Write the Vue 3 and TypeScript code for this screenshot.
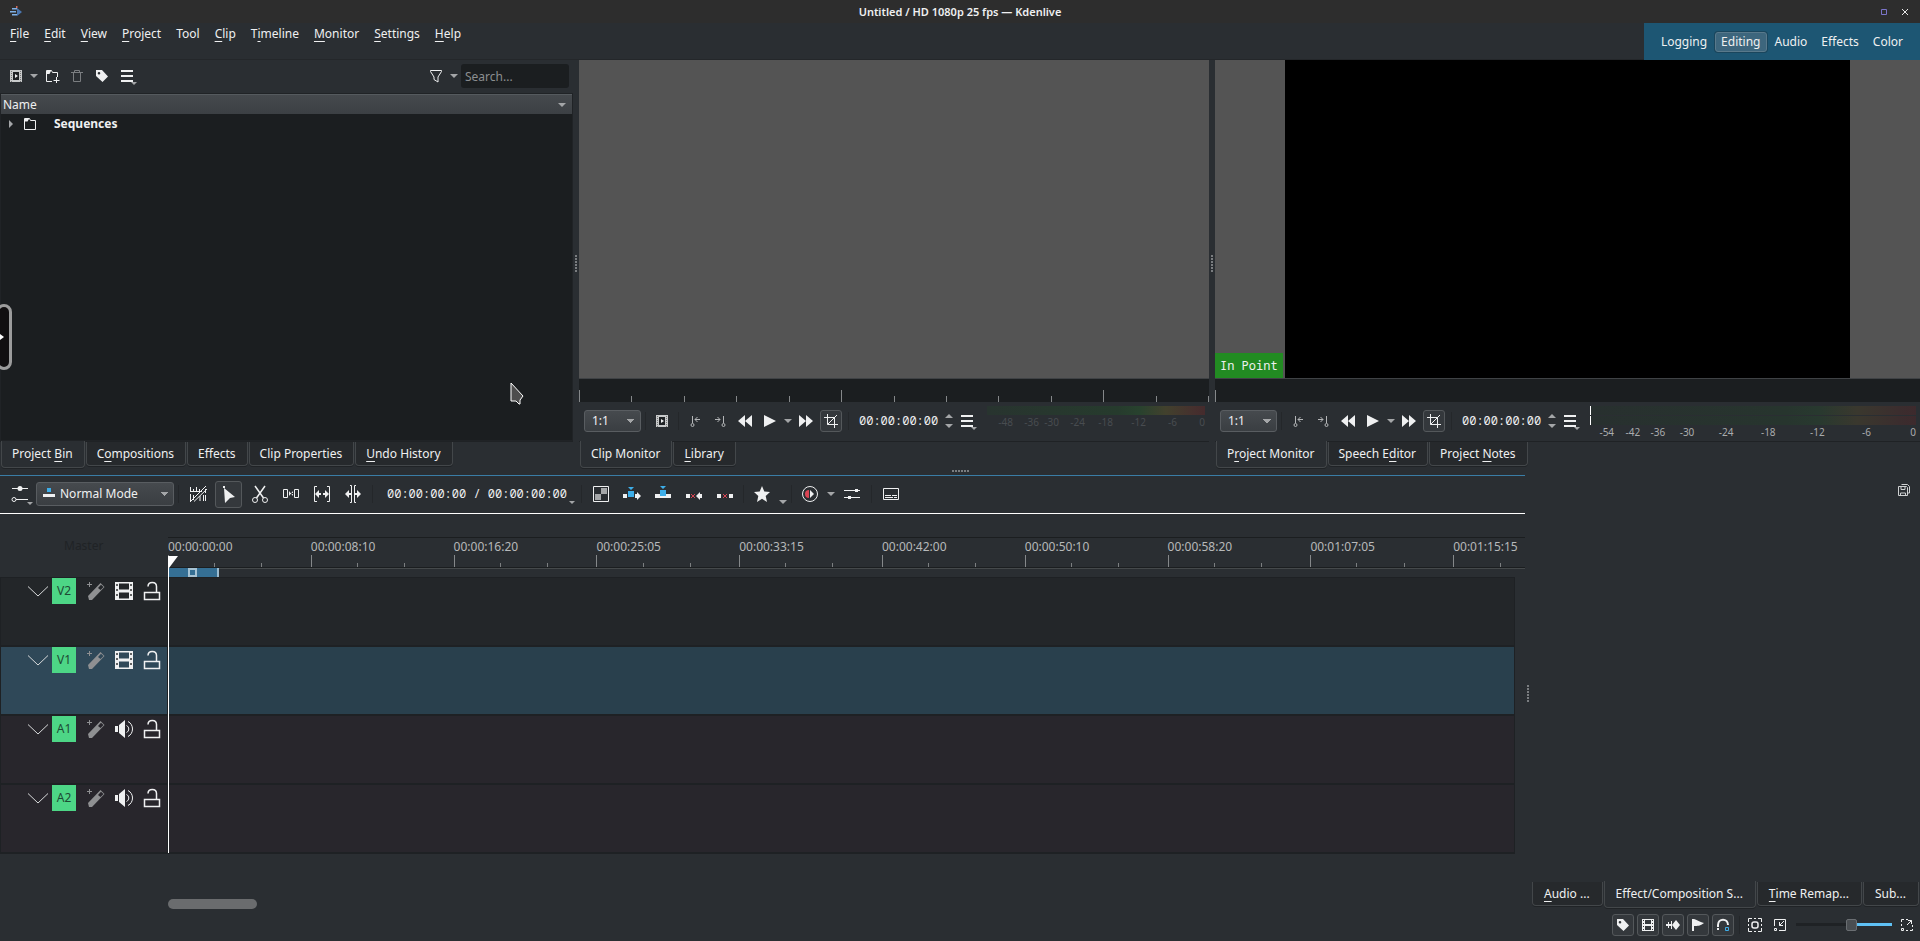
<script setup lang="ts">
import { ref } from 'vue'

interface Label { before: string; key: string; after: string }
interface Track { id: string; kind: 'video' | 'audio'; active: boolean }
interface Mark { text: string; grow: number }

/* An ampersand marks the mnemonic letter. */
function parse(text: string): Label {
  const i = text.indexOf('&')
  if (i < 0) return { before: text, key: '', after: '' }
  return { before: text.slice(0, i), key: text[i + 1], after: text.slice(i + 2) }
}

const menus = ['&File', '&Edit', '&View', '&Project', 'Tool', '&Clip', 'T&imeline', '&Monitor', '&Settings', '&Help'].map(parse)
const workspaces = ['Logging', 'Editing', 'Audio', 'Effects', 'Color']
const workspace = ref('Editing')

const binTabs = ['Project &Bin', 'C&ompositions', 'Effects', 'Clip Properties', '&Undo History'].map(parse)
const clipTabs = ['Clip Monitor', '&Library'].map(parse)
const projectTabs = ['P&roject Monitor', 'Speech E&ditor', 'Project &Notes'].map(parse)
const effectTabs = ['&Audio ...', 'Effect/Composition S...', '&Time Remap...', 'Sub...'].map(parse)

const clipMarks: Mark[] = [
  { text: '-48', grow: 26 }, { text: '-36', grow: 26 }, { text: '-30', grow: 20 }, { text: '-24', grow: 26 },
  { text: '-18', grow: 28 }, { text: '-12', grow: 33 }, { text: '-6', grow: 31 }, { text: '0', grow: 28 },
]
const projectMarks: Mark[] = [
  { text: '-54', grow: 24 }, { text: '-42', grow: 26 }, { text: '-36', grow: 25 }, { text: '-30', grow: 29 }, { text: '-24', grow: 39 },
  { text: '-18', grow: 42 }, { text: '-12', grow: 49 }, { text: '-6', grow: 46 }, { text: '0', grow: 45 },
]

const times = ['00:00:00:00', '00:00:08:10', '00:00:16:20', '00:00:25:05', '00:00:33:15', '00:00:42:00', '00:00:50:10', '00:00:58:20', '00:01:07:05', '00:01:15:15']
const tracks: Track[] = [
  { id: 'V2', kind: 'video', active: false },
  { id: 'V1', kind: 'video', active: true },
  { id: 'A1', kind: 'audio', active: false },
  { id: 'A2', kind: 'audio', active: false },
]

const monitorTools = [
  { icon: 'zoneIn', label: 'Set zone in' },
  { icon: 'zoneOut', label: 'Set zone out' },
  { icon: 'rewind', label: 'Rewind' },
  { icon: 'play', label: 'Play' },
]
const editTools = [
  { icon: 'group', label: 'Edit mode' },
  { icon: 'select', label: 'Selection tool' },
  { icon: 'razor', label: 'Razor tool' },
  { icon: 'spacer', label: 'Spacer tool' },
  { icon: 'slip', label: 'Slip tool' },
  { icon: 'ripple', label: 'Ripple tool' },
]
const insertTools = [
  { icon: 'mix', label: 'Mix clips' },
  { icon: 'insert', label: 'Insert zone' },
  { icon: 'overwrite', label: 'Overwrite zone' },
  { icon: 'extract', label: 'Extract zone' },
  { icon: 'lift', label: 'Lift zone' },
]
const statusTools = [
  { icon: 'tag', label: 'Color tags' },
  { icon: 'film16', label: 'Show video thumbnails' },
  { icon: 'wave', label: 'Show audio thumbnails' },
  { icon: 'flag', label: 'Show markers' },
  { icon: 'magnet', label: 'Snap' },
]
const zoom = ref(59)
const clipTime = ref('00:00:00:00')
const projectTime = ref('00:00:00:00')

const W = '#eff0f1'
const icons: Record<string, [number, string]> = {
  clip: [16, `<path d="M2 2h12v12H2z" fill="#c8cacb"/><path d="M5 4h6v8H5z" fill="#1f2225"/><path d="M7 6v4l3-2z" fill="${W}"/><path d="M3.500 3v11M12.500 3v11" stroke="#777" stroke-dasharray="1 1"/>`],
  down: [8, '<path d="M0 2h8L4 6z" fill="#a4a6a8"/>'],
  up: [8, '<path d="M0 6h8L4 2z" fill="#a4a6a8"/>'],
  folderAdd: [16, `<path d="M8 13.500H2.500v-11h5l1 2h5V9" fill="none" stroke="${W}"/><path d="M3 3h4l-1.500 3H3z" fill="${W}"/><path d="M12.500 9v6M9.500 12.500h6" fill="none" stroke="${W}"/>`],
  folder: [16, `<path d="M2.500 2.500h5l1 2h5v9h-11z" fill="none" stroke="${W}"/><path d="M3 3h4l-1.500 2.500H3z" fill="${W}"/>`],
  trash: [16, '<path d="M2 4.500h12M5.500 4V2.500h5V4M4.500 5v8.500h7V5" fill="none" stroke="#7a7d80"/>'],
  tag: [16, `<path fill-rule="evenodd" d="M2 2h6l6 6.500L8.500 14 2 8zM5 4a1.300 1.300 0 100 2.600A1.300 1.300 0 005 4z" fill="${W}"/>`],
  menu: [16, `<path d="M2 2h12v2H2zM2 7h12v2H2zM2 12h12v2H2z" fill="${W}"/>`],
  filter: [16, `<path d="M2.500 2.500h11v1L10 9v5L6 11.500V9L2.500 3.500z" fill="none" stroke="${W}"/>`],
  zoneIn: [16, '<path d="M5.500 3v7M8 6.500h5M10.500 4L8 6.500 10.500 9" fill="none" stroke="#b4b6b8"/><circle cx="5.500" cy="12" r="1.500" fill="none" stroke="#b4b6b8"/>'],
  zoneOut: [16, '<path d="M11.500 3v7M3 6.500h5M5.500 4L8 6.500 5.500 9" fill="none" stroke="#b4b6b8"/><circle cx="11.500" cy="12" r="1.500" fill="none" stroke="#b4b6b8"/>'],
  rewind: [16, `<path d="M8 2v12L1 8zM15 2v12L8 8z" fill="${W}"/>`],
  forward: [16, `<path d="M1 2v12l7-6zM8 2v12l7-6z" fill="${W}"/>`],
  play: [16, `<path d="M2 2v12l12-6z" fill="${W}"/>`],
  crop: [16, `<path d="M4.500 1v10.500H15M1 4.500h10.500V15M4.500 11.500L14 2" fill="none" stroke="${W}"/>`],
  trackSettings: [22, `<path d="M3 5.500h16M7 16.500h12" stroke="${W}"/><circle cx="11" cy="5.500" r="2.500" fill="${W}"/><circle cx="5" cy="16.500" r="2" fill="none" stroke="${W}"/>`],
  mode: [16, '<path d="M6 3h4v4H6z" fill="#3daee9"/><path d="M2 9h12v3H2z" fill="#eff0f1"/>'],
  group: [22, `<path d="M3.500 4v4M6.500 6v2M9.500 4v4M12.500 6v2M3 8.500h12M3.500 11v8M6.500 12v5M18.500 6v4M16.500 12v6M18.500 12v6M4 18L19 3M7 18.500L20 6M13 13v5" fill="none" stroke="${W}"/>`],
  select: [22, `<path d="M6 5l11 9-5 1-5 5z" fill="${W}"/><path d="M5 3h2v2H5z" fill="${W}"/>`],
  razor: [22, `<path d="M6 3l8.500 12M16 3L7.500 15" fill="none" stroke="${W}" stroke-width="1.500"/><circle cx="6" cy="17" r="2.500" fill="none" stroke="${W}"/><circle cx="16" cy="17" r="2.500" fill="none" stroke="${W}"/>`],
  spacer: [22, `<path d="M3.500 6.500h4v8h-4zM14.500 6.500h4v8h-4z" fill="none" stroke="${W}"/><path d="M9 8l2 2.500L9 13zM13 8l-2 2.500 2 2.500zM9 10h4v1H9z" fill="${W}"/>`],
  slip: [22, `<path d="M6 3.500H3.500v15H6M16 3.500h2.500v15H16" fill="none" stroke="${W}"/><path d="M4 11l4-4v3h2v2H8v3zM18 11l-4-4v3h-2v2h2v3z" fill="${W}"/>`],
  ripple: [22, `<path d="M8 2.500h1.500v17H8M14 2.500h-1.500v17H14" fill="none" stroke="${W}"/><path d="M3 11l4-4v3h2v2H7v3zM19 11l-4-4v3h-2v2h2v3z" fill="${W}"/>`],
  mix: [22, `<path d="M3.500 3.500h15v15h-15z" fill="none" stroke="${W}"/><path d="M11 5h6v6h-6zM5 11h6v6H5z" fill="#a5a7a9"/>`],
  insert: [22, `<path d="M2 11h4v4H2zM14 11h2V9l4 4-4 4v-2h-2z" fill="${W}"/><path d="M7 8h6v6H7zM7 4h6l-3 3z" fill="#3daee9"/>`],
  overwrite: [22, `<path d="M3 11h16v4H3z" fill="${W}"/><path d="M8 7h6v6H8zM8 3h6l-3 3z" fill="#3daee9"/>`],
  extract: [22, `<path d="M3 11h4v4H3zM19 11h-2V9l-4 4 4 4v-2h2z" fill="${W}"/><path d="M8 11l4 4M12 11l-4 4" stroke="#da4453"/>`],
  lift: [22, `<path d="M3 11h4v4H3zM15 11h4v4h-4z" fill="${W}"/><path d="M9 11l4 4M13 11l-4 4" stroke="#da4453"/>`],
  star: [22, `<path d="M11 3l2.300 5.500 5.700.5-4.300 4 1.300 6-5-3.200L6 19l1.300-6L3 9l5.700-.5z" fill="${W}"/>`],
  preview: [22, `<circle cx="11" cy="11" r="7.500" fill="none" stroke="${W}"/><path d="M10 7v8a4 4 0 010-8z" fill="#da4453"/><path d="M11 7l4 4-4 4z" fill="${W}"/>`],
  sliders: [22, `<path d="M3 7.500h16M3 14.500h16" stroke="${W}"/><path d="M14 6h3v3h-3zM7 13h3v3H7z" fill="${W}"/>`],
  subtitle: [22, `<path d="M3.500 5.500h15v11h-15zM5 12.500h6M12 12.500h5M5 14.500h8M14 14.500h3" fill="none" stroke="${W}"/>`],
  chevron: [22, '<path d="M1 6.500l10 9.500 10-9.500" fill="none" stroke="#d8dadb"/>'],
  wand: [20, '<path fill-rule="evenodd" d="M2 15L14.500 2l4 4L6 19H3zM12 7l2.500 2 3-3-2.500-2.300z" fill="#8f9092"/><path d="M3.500 1v5M1 3.500h5" stroke="#8f9092"/>'],
  film: [20, `<path fill-rule="evenodd" d="M1 1h18v18H1zM5 2.500v6h10v-6zM5 11.500v6h10v-6z" fill="${W}"/><path d="M3 3v15M17 3v15" stroke="#333" stroke-width="1.500" stroke-dasharray="2 3"/>`],
  speaker: [20, `<path d="M1 7h3v6H1zM5 6l6-5v18l-6-5z" fill="${W}"/><path d="M12.500 6.500c3 1.500 3 5.500 0 7M14 2.500c6 3 6 12 0 15" fill="none" stroke="${W}"/>`],
  lock: [20, `<path d="M2.500 11.500h15v7h-15z" fill="none" stroke="${W}" stroke-width="1.500"/><path d="M6 5.500c0-5.500 8.500-5.500 8.500 0v6" fill="none" stroke="${W}" stroke-width="1.500"/>`],
  film16: [16, `<path fill-rule="evenodd" d="M2 2h12v12H2zM5 3v4h6V3zM5 9v4h6V9z" fill="${W}"/><path d="M3.500 3v11M12.500 3v11" stroke="#333" stroke-dasharray="1 2"/>`],
  wave: [16, `<path d="M1 7h2V5h1v2h2V4h1v8H6V9H4v2H3V9H1zM7 8l4-5 4 5-4 5z" fill="${W}"/>`],
  flag: [16, `<path d="M2 2h2c4 1 5 3 10 4-4 3-6 3-10 3v5H2z" fill="${W}"/>`],
  magnet: [16, `<path d="M3 13V8c0-7 10-7 10 0" fill="none" stroke="${W}" stroke-width="2"/><path d="M2 10.500h2" stroke="#3a3d41"/><path d="M10.500 10.500h3v3h-3z" fill="none" stroke="#3daee9"/>`],
  fit: [16, `<path d="M1.500 5V1.500H5M11 1.500h3.500V5M14.500 11v3.500H11M5 14.500H1.500V11M7 1.500h2M7 14.500h2M1.500 7v2M14.500 7v2" fill="none" stroke="${W}"/><rect x="5" y="5" width="6" height="6" rx="2" fill="none" stroke="${W}" stroke-width="1.500"/>`],
  zoomOut: [16, `<path d="M2.500 9V2.500h11v11H7M12 4L7.500 8.500M7.500 5v3.500H11M2.500 11.500h2v2h-2z" fill="none" stroke="${W}"/>`],
  zoomIn: [16, `<path d="M2.500 5V2.500H5M7 2.500h2M13.500 8v2M13.500 12v1.500H11M9 13.500H7M2.500 7v2M8 8l4.500-4.500M9 3.500h3.500V7M2.500 11.500h2v2h-2z" fill="none" stroke="${W}"/>`],
  saveAll: [16, '<path d="M2.500 4.500h8l1 1v8h-9zM5.500 2.500h6l2 2v6.500h-1.500M5 5v2.500h4V5M4.500 13v-2h5v2" fill="none" stroke="#cfd1d2"/>'],
  app: [16, '<path d="M4 4h5v1.500H4zM2 7h6v1.500H2zM4 10h5v1.500H4z" fill="#7fb0e6"/><path d="M9 4l5 4-5 4z" fill="#4a76b0"/><path d="M8 2h1.500v2H8z" fill="#d06a5a"/>'],
}
</script>

<template>
  <div class="window">
    <header class="titlebar">
      <svg class="i16" viewBox="0 0 16 16" v-html="icons.app[1]"></svg>
      <h1>Untitled / HD 1080p 25 fps — Kdenlive</h1>
      <div class="winbuttons">
        <button aria-label="Maximize"><svg viewBox="0 0 8 8"><path d="M1.500 1.500h5v5h-5z" fill="none" stroke="#7b74c9" /></svg></button>
        <button aria-label="Close"><svg viewBox="0 0 8 8"><path d="M1 1l6 6M7 1L1 7" stroke="#e8e8e8" /></svg></button>
      </div>
    </header>

    <div class="menubar">
      <nav class="menus">
        <button v-for="m in menus" :key="m.before + m.key">{{ m.before }}<u>{{ m.key }}</u>{{ m.after }}</button>
      </nav>
      <nav class="workspaces">
        <button v-for="w in workspaces" :key="w" :class="{ on: w === workspace }" @click="workspace = w">{{ w }}</button>
      </nav>
    </div>

    <main class="docks">
      <section class="dock bin">
        <div class="bintools">
          <button class="tool" aria-label="Add clip"><svg class="i16" viewBox="0 0 16 16" v-html="icons.clip[1]"></svg></button>
          <button class="drop" aria-label="Add clip menu"><svg viewBox="0 0 8 8" v-html="icons.down[1]"></svg></button>
          <button class="tool" aria-label="Create folder"><svg class="i16" viewBox="0 0 16 16" v-html="icons.folderAdd[1]"></svg></button>
          <button class="tool" aria-label="Delete" disabled><svg class="i16" viewBox="0 0 16 16" v-html="icons.trash[1]"></svg></button>
          <button class="tool" aria-label="Tags"><svg class="i16" viewBox="0 0 16 16" v-html="icons.tag[1]"></svg></button>
          <button class="tool corner" aria-label="Options"><svg class="i16" viewBox="0 0 16 16" v-html="icons.menu[1]"></svg></button>
          <span class="fill"></span>
          <button class="tool" aria-label="Filter"><svg class="i16" viewBox="0 0 16 16" v-html="icons.filter[1]"></svg></button>
          <button class="drop" aria-label="Filter menu"><svg viewBox="0 0 8 8" v-html="icons.down[1]"></svg></button>
          <input class="search" type="search" placeholder="Search..." aria-label="Search" />
        </div>
        <div class="tree">
          <button class="treehead"><span>Name</span><svg viewBox="0 0 8 8" v-html="icons.down[1]"></svg></button>
          <div class="treerow">
            <svg class="twist" viewBox="0 0 8 8"><path d="M2 0v8l4-4z" fill="#a4a6a8" /></svg>
            <svg class="i16" viewBox="0 0 16 16" v-html="icons.folder[1]"></svg>
            <strong>Sequences</strong>
          </div>
        </div>
        <nav class="tabs">
          <button v-for="(t, i) in binTabs" :key="i" :class="{ on: i === 0 }">{{ t.before }}<u>{{ t.key }}</u>{{ t.after }}</button>
        </nav>
      </section>

      <div class="split"><i></i></div>

      <section class="dock clipmon">
        <div class="screen"></div>
        <div class="monruler"><i v-for="n in 12" :key="n" :class="{ tall: n === 1 || n === 6 || n === 11 }"></i></div>
        <div class="montools">
          <select aria-label="Clip monitor zoom"><option>1:1</option></select>
          <span class="sep"></span>
          <button class="tool" aria-label="Clip options"><svg class="i16" viewBox="0 0 16 16" v-html="icons.clip[1]"></svg></button>
          <span class="sep"></span>
          <button v-for="t in monitorTools" :key="t.icon" class="tool" :aria-label="t.label"><svg class="i16" viewBox="0 0 16 16" v-html="icons[t.icon][1]"></svg></button>
          <button class="drop" aria-label="Play menu"><svg viewBox="0 0 8 8" v-html="icons.down[1]"></svg></button>
          <button class="tool" aria-label="Forward"><svg class="i16" viewBox="0 0 16 16" v-html="icons.forward[1]"></svg></button>
          <button class="boxed" aria-label="Edit mode"><svg class="i16" viewBox="0 0 16 16" v-html="icons.crop[1]"></svg></button>
          <span class="sep"></span>
          <input v-model="clipTime" class="timecode" aria-label="Clip timecode" />
          <span class="spin"><button aria-label="Next frame"><svg viewBox="0 0 8 8" v-html="icons.up[1]"></svg></button><button aria-label="Previous frame"><svg viewBox="0 0 8 8" v-html="icons.down[1]"></svg></button></span>
          <button class="tool corner" aria-label="Monitor options"><svg class="i16" viewBox="0 0 16 16" v-html="icons.menu[1]"></svg></button>
          <div class="meter dim">
            <div class="bars"><i></i></div>
            <div class="marks"><span v-for="m in clipMarks" :key="m.text" :style="{ flexGrow: m.grow }">{{ m.text }}</span></div>
          </div>
        </div>
        <nav class="tabs">
          <button v-for="(t, i) in clipTabs" :key="i" :class="{ on: i === 0 }">{{ t.before }}<u>{{ t.key }}</u>{{ t.after }}</button>
        </nav>
      </section>

      <div class="split"><i></i></div>

      <section class="dock projmon">
        <div class="screen">
          <div class="frame"></div>
          <span class="inpoint">In Point</span>
        </div>
        <div class="monruler"><i class="tall"></i></div>
        <div class="montools">
          <select aria-label="Project monitor zoom"><option>1:1</option></select>
          <span class="sep"></span>
          <button v-for="t in monitorTools" :key="t.icon" class="tool" :aria-label="t.label"><svg class="i16" viewBox="0 0 16 16" v-html="icons[t.icon][1]"></svg></button>
          <button class="drop" aria-label="Play menu"><svg viewBox="0 0 8 8" v-html="icons.down[1]"></svg></button>
          <button class="tool" aria-label="Forward"><svg class="i16" viewBox="0 0 16 16" v-html="icons.forward[1]"></svg></button>
          <button class="boxed" aria-label="Edit mode"><svg class="i16" viewBox="0 0 16 16" v-html="icons.crop[1]"></svg></button>
          <span class="sep"></span>
          <input v-model="projectTime" class="timecode" aria-label="Project timecode" />
          <span class="spin"><button aria-label="Next frame"><svg viewBox="0 0 8 8" v-html="icons.up[1]"></svg></button><button aria-label="Previous frame"><svg viewBox="0 0 8 8" v-html="icons.down[1]"></svg></button></span>
          <button class="tool corner" aria-label="Monitor options"><svg class="i16" viewBox="0 0 16 16" v-html="icons.menu[1]"></svg></button>
          <div class="meter live">
            <div class="bars"><i></i><i></i></div>
            <div class="marks"><span v-for="m in projectMarks" :key="m.text" :style="{ flexGrow: m.grow }">{{ m.text }}</span></div>
          </div>
        </div>
        <nav class="tabs">
          <button v-for="(t, i) in projectTabs" :key="i" :class="{ on: i === 0 }">{{ t.before }}<u>{{ t.key }}</u>{{ t.after }}</button>
        </nav>
      </section>
    </main>

    <div class="hsplit"><i></i></div>

    <div class="lower">
      <section class="timeline">
        <div class="edittools">
          <button class="big corner" aria-label="Track settings"><svg class="i22" viewBox="0 0 22 22" v-html="icons.trackSettings[1]"></svg></button>
          <label class="mode">
            <svg class="i16" viewBox="0 0 16 16" v-html="icons.mode[1]"></svg>
            <select aria-label="Timeline edit mode"><option>Normal Mode</option></select>
          </label>
          <span class="sep"></span>
          <button v-for="t in editTools" :key="t.icon" class="big" :class="{ pressed: t.icon === 'select' }" :aria-label="t.label"><svg class="i22" viewBox="0 0 22 22" v-html="icons[t.icon][1]"></svg></button>
          <span class="sep"></span>
          <button class="position">00:00:00:00 / 00:00:00:00</button>
          <span class="sep"></span>
          <button v-for="t in insertTools" :key="t.icon" class="big" :aria-label="t.label"><svg class="i22" viewBox="0 0 22 22" v-html="icons[t.icon][1]"></svg></button>
          <span class="sep narrow"></span>
          <button class="big" aria-label="Favorite effects"><svg class="i22" viewBox="0 0 22 22" v-html="icons.star[1]"></svg></button>
          <button class="drop low" aria-label="Favorites menu"><svg viewBox="0 0 8 8" v-html="icons.down[1]"></svg></button>
          <span class="sep narrow"></span>
          <button class="big" aria-label="Start preview render"><svg class="i22" viewBox="0 0 22 22" v-html="icons.preview[1]"></svg></button>
          <button class="drop" aria-label="Preview menu"><svg viewBox="0 0 8 8" v-html="icons.down[1]"></svg></button>
          <button class="big" aria-label="Audio mixer"><svg class="i22" viewBox="0 0 22 22" v-html="icons.sliders[1]"></svg></button>
          <span class="sep"></span>
          <button class="big" aria-label="Subtitles"><svg class="i22" viewBox="0 0 22 22" v-html="icons.subtitle[1]"></svg></button>
        </div>

        <div class="sequence">
          <div class="rulerrow">
            <div class="master">Master</div>
            <div class="ruler">
              <div v-for="t in times" :key="t" class="cell"><span>{{ t }}</span><b></b><b></b></div>
            </div>
          </div>
          <div class="zonerow"><div class="zone"><i></i></div></div>
          <div class="tracks">
            <div v-for="t in tracks" :key="t.id" class="track" :class="[t.kind, { active: t.active }]">
              <div class="head">
                <button class="chev" aria-label="Collapse track"><svg class="i22" viewBox="0 0 22 22" v-html="icons.chevron[1]"></svg></button>
                <button class="badge">{{ t.id }}</button>
                <button class="trk" aria-label="Track effects"><svg viewBox="0 0 20 20" v-html="icons.wand[1]"></svg></button>
                <button class="trk" aria-label="Disable track"><svg viewBox="0 0 20 20" v-html="icons[t.kind === 'video' ? 'film' : 'speaker'][1]"></svg></button>
                <button class="trk" aria-label="Lock track"><svg viewBox="0 0 20 20" v-html="icons.lock[1]"></svg></button>
              </div>
              <div class="lane"></div>
            </div>
          </div>
          <div class="playhead"><svg viewBox="0 0 10 12"><path d="M0 0h10L1 12H0z" fill="#fff" /></svg></div>
        </div>
        <div class="scroll"><i></i></div>
      </section>

      <div class="split lowsplit"><i></i></div>

      <aside class="effects">
        <button class="save" aria-label="Save effect stack"><svg class="i16" viewBox="0 0 16 16" v-html="icons.saveAll[1]"></svg></button>
        <span class="fill"></span>
        <nav class="tabs">
          <button v-for="(t, i) in effectTabs" :key="i" :class="{ on: i === 1 }">{{ t.before }}<u>{{ t.key }}</u>{{ t.after }}</button>
        </nav>
        <div class="status">
          <button v-for="t in statusTools" :key="t.icon" class="boxed" :aria-label="t.label"><svg class="i16" viewBox="0 0 16 16" v-html="icons[t.icon][1]"></svg></button>
          <span class="sep narrow"></span>
          <button class="tool" aria-label="Fit zoom"><svg class="i16" viewBox="0 0 16 16" v-html="icons.fit[1]"></svg></button>
          <button class="tool" aria-label="Zoom out"><svg class="i16" viewBox="0 0 16 16" v-html="icons.zoomOut[1]"></svg></button>
          <input v-model="zoom" type="range" min="0" max="100" aria-label="Timeline zoom" />
          <button class="tool" aria-label="Zoom in"><svg class="i16" viewBox="0 0 16 16" v-html="icons.zoomIn[1]"></svg></button>
        </div>
      </aside>
    </div>

    <button class="edgehandle" aria-label="Open side panel"><svg viewBox="0 0 4 6"><path d="M0 0l4 3-4 3z" fill="#fff" /></svg></button>
    <svg class="pointer" viewBox="0 0 14 23"><path d="M1 1v18h5l3 3h1v-4l3-4z" fill="#4d4d4d" stroke="#fff" /></svg>
  </div>
</template>

<style>
body { margin: 0; background: #2a2e32; }
</style>

<style scoped>
.window, .window * { box-sizing: border-box; }
.window {
  position: relative;
  display: flex;
  flex-direction: column;
  min-height: 100vh;
  overflow: hidden;
  background: #2a2e32;
  color: #eff0f1;
  font: 12px/16px "Noto Sans", sans-serif;
}
button, input, select {
  margin: 0;
  padding: 0;
  border: 0;
  background: none;
  color: inherit;
  font: inherit;
  white-space: nowrap;
}
u { text-decoration: underline; text-decoration-thickness: 1px; text-underline-offset: 3px; }
svg { display: block; flex: none; }
.i16 { width: 16px; height: 16px; }
.i22 { width: 22px; height: 22px; }
.fill { flex: 1; }

.titlebar { display: flex; align-items: center; height: 23px; padding: 0 11px 0 8px; background: #2d2d2d; }
.titlebar h1 { flex: 1; margin: 0; text-align: center; font-size: 11px; font-weight: 600; line-height: 16px; padding-left: 16px; }
.winbuttons { display: flex; gap: 13px; }
.winbuttons svg { width: 8px; height: 8px; }

.menubar { display: flex; justify-content: space-between; height: 37px; border-bottom: 1px solid #24272a; }
.menus { display: flex; padding: 0 3px; height: 22px; }
.menus button { padding: 0 8px 0 7px; }
.workspaces { display: flex; align-items: center; gap: 1px; height: 37px; padding: 0 10px 0 11px; background: #1d5673; }
.workspaces button { height: 20px; padding: 0 6px 0 5px; border: 1px solid transparent; border-radius: 3px; line-height: 16px; }
.workspaces .on { background: #3d667d; border-color: #59798b; box-shadow: 0 0 0 1px #1a465d; }

.docks { flex: 407 1 0; display: flex; min-height: 320px; }
.dock { display: flex; flex-direction: column; min-width: 0; }
.bin { flex: 573 1 0; }
.clipmon { flex: 630 1 0; }
.projmon { flex: 705 1 0; }
.split { flex: none; width: 6px; display: flex; align-items: center; justify-content: center; }
.split i { width: 2px; height: 17px; background: repeating-linear-gradient(#7a7d80 0 2px, transparent 2px 3px); }
.hsplit { flex: none; height: 8px; display: flex; justify-content: center; align-items: center; }
.hsplit i { height: 2px; width: 17px; background: repeating-linear-gradient(90deg, #7a7d80 0 2px, transparent 2px 3px); }

.tool { width: 25px; height: 24px; display: flex; align-items: center; justify-content: center; position: relative; }
.drop { width: 11px; height: 24px; display: flex; align-items: center; justify-content: center; }
.drop svg { width: 8px; height: 8px; }
.drop.low { align-items: flex-end; }
.boxed { width: 22px; height: 22px; display: flex; align-items: center; justify-content: center; border: 1px solid #54585b; border-radius: 3px; background: #34383c; }
.corner { position: relative; }
.corner::after { content: ""; position: absolute; right: 2px; bottom: 3px; border: 3px solid transparent; border-top-color: #a4a6a8; border-bottom: 0; }
.sep { flex: none; width: 8px; height: 18px; background: linear-gradient(#24272a, #24272a) center / 1px 100% no-repeat; }
.sep.narrow { width: 6px; }

.bintools { display: flex; align-items: center; height: 33px; padding: 0 4px 1px 3px; flex: none; }
.search { width: 108px; height: 24px; margin-left: 2px; padding: 0 4px; border-radius: 3px; background: #1b1e20; }
.search::placeholder { color: #8b8e90; opacity: 1; }
.tree { flex: 1; background: #1b1e20; border: 1px solid #202326; }
.treehead { display: flex; justify-content: space-between; align-items: center; width: 100%; height: 20px; padding: 0 6px 0 2px; border-top: 1px solid #555a5e; background: linear-gradient(#45494d, #3c4044); }
.treehead svg, .twist { width: 8px; height: 8px; }
.treerow { display: flex; align-items: center; height: 20px; padding-left: 6px; gap: 7px; }
.treerow strong { margin-left: 9px; font-weight: 700; }

.tabs { flex: none; display: flex; align-items: flex-start; height: 26px; padding-left: 1px; gap: 1px; border-top: 1px solid #1f2225; }
.tabs button { height: 24px; padding: 0 11px 0 10px; border: 1px solid #43474a; border-top: 0; border-radius: 0 0 4px 4px; background: #26292c; line-height: 22px; box-shadow: 0 1px 0 #202326; }
.tabs .on { height: 27px; margin-top: -1px; background: #2a2e32; line-height: 26px; }

.screen { flex: 1; display: flex; justify-content: center; position: relative; background: #545454; }
.frame { aspect-ratio: 16 / 9; background: #000; }
.inpoint { position: absolute; left: 0; bottom: 0; height: 25px; padding: 0 5px; background: #228b22; font: 12px/26px "Noto Sans Mono", "DejaVu Sans Mono", monospace; }
.monruler { flex: none; display: flex; align-items: flex-end; height: 24px; border-top: 1px solid #3f4245; background: #1b1e20; }
.monruler i { flex: 1; height: 6px; border-left: 1px solid #85888a; }
.monruler .tall { height: 12px; }
.monruler i:last-child:not(.tall) { border-right: 1px solid #85888a; }
.montools { flex: none; display: flex; align-items: center; height: 39px; padding: 0 4px 2px 5px; }
.montools > select { width: 57px; height: 22px; }
select {
  appearance: none;
  padding: 0 7px;
  border: 1px solid #595d61;
  border-radius: 3px;
  background:
    linear-gradient(45deg, transparent 50%, #a4a6a8 50%) right 9px center / 4px 4px no-repeat,
    linear-gradient(-45deg, transparent 50%, #a4a6a8 50%) right 5px center / 4px 4px no-repeat,
    linear-gradient(#464a4e, #3a3e42);
  background:
    linear-gradient(to top right, transparent 50%, #a4a6a8 50%) right 9px center / 4px 4px no-repeat,
    linear-gradient(to top left, transparent 50%, #a4a6a8 50%) right 5px center / 4px 4px no-repeat,
    linear-gradient(#464a4e, #3a3e42);
}
.montools .boxed { margin: 0 2px; }
.timecode { width: 84px; height: 22px; margin-left: 7px; font: 12px/20px "Noto Sans Mono", "DejaVu Sans Mono", monospace; }
.spin { display: flex; flex-direction: column; gap: 2px; width: 11px; align-items: center; }
.spin svg { width: 8px; height: 8px; }
.meter { flex: 1; min-width: 0; margin-left: 8px; align-self: stretch; padding-top: 4px; }
.bars { display: flex; flex-direction: column; gap: 1px; }
.bars i { height: 9px; background: linear-gradient(90deg, #28342f, #263b2d 60%, #28422e 70%, #42412d 82%, #46302e 95%, #452b2d); }
.marks { display: flex; }
.marks span { flex: 1 1 0; width: 0; text-align: right; white-space: nowrap; font-size: 10px; line-height: 14px; }
.dim .marks { color: #484c50; }
.live .marks { color: #a9abad; }
.live .bars i { border-left: 1px solid #fff; background: linear-gradient(90deg, #28302f, #27352e 60%, #28392f 70%, #3a382e 82%, #3b2d2e 95%, #3d2a2d); }

.lower { flex: 466 1 0; display: flex; min-height: 440px; }
.timeline { flex: 1525 1 0; min-width: 0; display: flex; flex-direction: column; border-top: 1px solid #3a7da6; }
.edittools { flex: none; display: flex; align-items: center; height: 38px; padding: 0 0 1px 4px; border-bottom: 1px solid #fff; }
.big { flex: none; width: 31px; height: 28px; display: flex; align-items: center; justify-content: center; }
.pressed { width: 27px; height: 27px; margin: 0 2px; border: 1px solid #54585b; border-radius: 3px; background: #34383c; }
.mode { position: relative; width: 138px; margin-left: 1px; }
.mode svg { position: absolute; left: 5px; top: 3px; }
.mode select { width: 138px; height: 24px; padding: 0 23px; }
.position { position: relative; width: 201px; padding-left: 11px; text-align: left; font: 12px/20px "Noto Sans Mono", "DejaVu Sans Mono", monospace; }
.position::after { content: ""; position: absolute; right: 2px; bottom: 0; border: 3px solid transparent; border-top-color: #a4a6a8; border-bottom: 0; }

.sequence { position: relative; margin-top: 23px; }
.rulerrow { display: flex; height: 31px; }
.master { width: 168px; padding-left: 64px; line-height: 18px; color: #202326; }
.ruler { flex: 1; min-width: 0; display: flex; overflow: hidden; border-top: 1px solid #1b1e20; border-bottom: 1px solid #1b1e20; }
.cell { flex: 1000 1 0; min-width: 0; display: flex; align-items: flex-end; align-content: space-between; flex-wrap: wrap; background: linear-gradient(#85888a, #85888a) left bottom / 1px 12px no-repeat; color: #b7b9ba; }
.cell:last-child { flex-grow: 503; }
.cell span { width: 100%; line-height: 17px; white-space: nowrap; }
.cell b { width: 33%; height: 4px; border-right: 1px solid #7c7f81; }
.cell:last-child b { width: 66%; }
.cell:last-child b + b { display: none; }
.zonerow { height: 9px; margin-left: 168px; border-top: 1px solid #45494b; }
.zone { width: 51px; height: 9px; margin-top: -1px; display: flex; justify-content: center; background: #356f94; border-right: 2px solid #9dbccf; position: relative; }
.zone i { width: 9px; height: 9px; border: 2px solid #a6c3d4; }
.tracks { margin-right: 10px; border: 1px solid #1e2124; border-bottom: 0; }
.track { display: flex; height: 69px; border-bottom: 2px solid #1e2124; background: #232629; }
.audio { background: #28262c; }
.head { width: 167px; display: flex; align-items: flex-start; padding-left: 26px; border-right: 1px solid #1e2124; }
.lane { flex: 1; }
.active .head { background: #2f4858; }
.active .lane { background: #29404d; }
.chev { width: 22px; height: 26px; margin-right: 3px; }
.badge { width: 24px; height: 26px; margin-right: 6px; background: #4dd686; color: #1d4a34; }
.trk { width: 28px; height: 26px; display: flex; align-items: center; justify-content: center; }
.trk svg { width: 20px; height: 20px; }
.playhead { position: absolute; left: 168px; top: 19px; bottom: 1px; width: 1px; background: #fff; }
.playhead svg { width: 10px; height: 12px; }
.scroll { margin: 45px 10px 0 168px; }
.scroll i { display: block; width: 89px; height: 10px; border-radius: 5px; background: #6a6c6e; }

.lowsplit i { margin-bottom: 30px; }
.effects { flex: 389 1 0; min-width: 0; display: flex; flex-direction: column; }
.save { align-self: flex-end; margin: 7px 8px 0 0; }
.effects .tabs { border-top: 0; }
.effects .tabs button { flex: none; padding: 0 12px 0 11px; }
.status { display: flex; align-items: center; justify-content: flex-end; gap: 3px; height: 33px; padding-right: 2px; }
.status .tool { width: 22px; }
.status .narrow { width: 4px; }
input[type="range"] {
  appearance: none;
  width: 96px;
  height: 12px;
  margin: 0 1px 0 2px;
  background: linear-gradient(90deg, #1f2225 59%, #5fc1f5 59%) center / 100% 3px no-repeat;
}
input[type="range"]::-webkit-slider-thumb { appearance: none; width: 11px; height: 12px; border: 1px solid #6a6e72; border-radius: 2px; background: #4a4e52; }

.edgehandle { position: absolute; left: -4px; top: 304px; width: 16px; height: 66px; padding-left: 1px; border: 3px solid #9c9c9c; border-radius: 9px; background: #110f10; }
.edgehandle svg { width: 4px; height: 6px; }
.pointer { position: absolute; left: 510px; top: 382px; width: 14px; height: 23px; }
</style>
